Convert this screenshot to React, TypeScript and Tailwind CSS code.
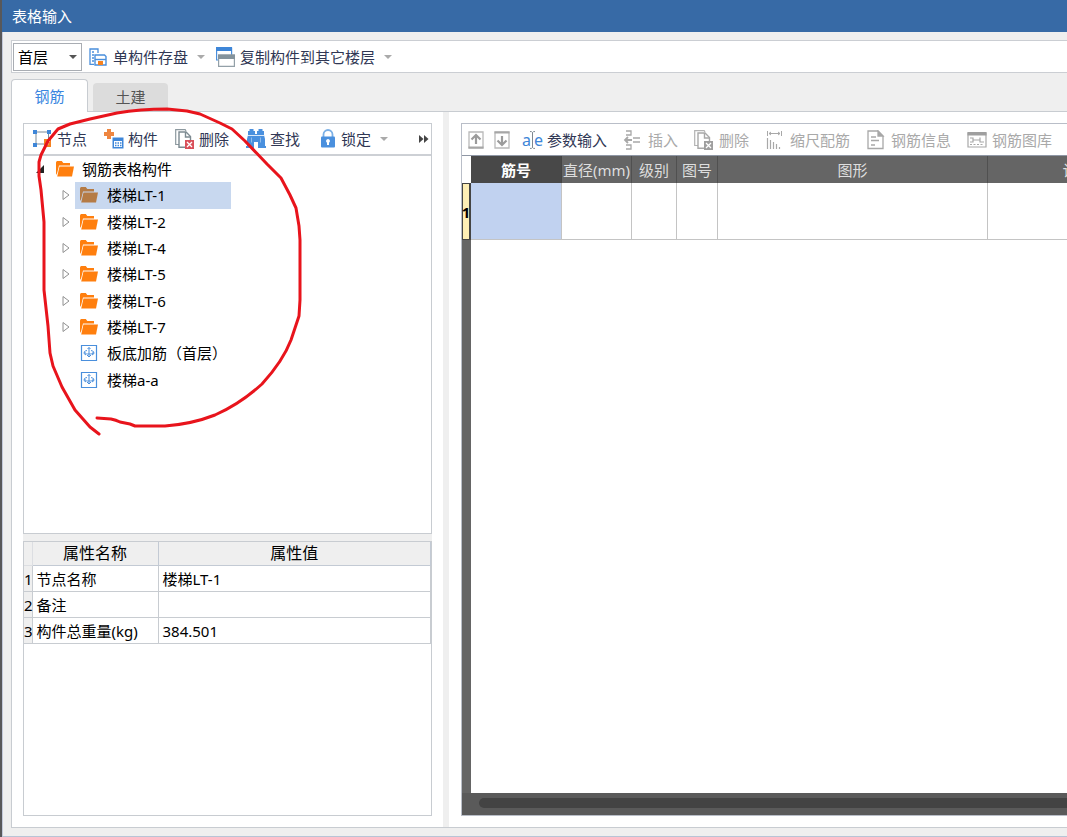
import React from "react";

const treeItems = [
  { label: "楼梯LT-1", folder: true, selected: true },
  { label: "楼梯LT-2", folder: true },
  { label: "楼梯LT-4", folder: true },
  { label: "楼梯LT-5", folder: true },
  { label: "楼梯LT-6", folder: true },
  { label: "楼梯LT-7", folder: true },
  { label: "板底加筋（首层）", folder: false },
  { label: "楼梯a-a", folder: false },
];

const properties = [
  { name: "节点名称", value: "楼梯LT-1" },
  { name: "备注", value: "" },
  { name: "构件总重量(kg)", value: "384.501" },
];

function Caret({ className }: { className: string }) {
  return (
    <svg viewBox="0 0 8 4" className={`h-1 w-2 shrink-0 ${className}`} fill="currentColor">
      <path d="M0 0h8L4 4z" />
    </svg>
  );
}

function SaveIcon() {
  return (
    <svg viewBox="0 0 18 18" className="h-[18px] w-[18px] shrink-0" fill="none">
      <path d="M5 16.3H1V1h8v4" stroke="#4a8fdc" strokeWidth="1.3" />
      <path d="M3 4h2M3 7h2M3 10h2M3 13h2" stroke="#4a8fdc" strokeWidth="1.3" />
      <path d="M6 7h9.500l1.500 1.500V17H6z" fill="#fff" stroke="#4a8fdc" strokeWidth="1.4" />
      <path d="M6 11.500h11" stroke="#4a8fdc" strokeWidth="1.400" />
      <path d="M9 13h5v4H9z" fill="#f58220" />
    </svg>
  );
}

function CopyFloorIcon() {
  return (
    <svg viewBox="0 0 19 20" className="h-5 w-[19px] shrink-0" fill="none">
      <path d="M.6 1h15v12H.6z" fill="#fff" stroke="#4a8fdc" strokeWidth="1.200" />
      <path d="M0 0h16v4H0z" fill="#3e86d8" />
      <path d="M2.600 8h15.800v11.400H2.600z" fill="#fff" stroke="#93a0a8" strokeWidth="1.200" />
      <path d="M2 7.500h17V12H2z" fill="#84939c" />
    </svg>
  );
}

function NodeIcon() {
  return (
    <svg viewBox="0 0 20 20" className="h-5 w-5 shrink-0" fill="none">
      <path d="M3 3h12.500v12H3z" stroke="#7d8b97" strokeWidth="1" />
      <path d="M0 1h4v4H0zM14 1h4v4h-4zM0 14h4v4H0z" fill="#3e86d8" />
      <path d="M11 10h7v8h-7z" fill="#f58220" />
      <path d="M13 15.500h2v-3h2" stroke="#fff" strokeWidth="1" />
    </svg>
  );
}

function ComponentIcon() {
  return (
    <svg viewBox="0 0 20 20" className="h-5 w-5 shrink-0" fill="none">
      <path d="M3 0h4v3h3v4H7v3H3V7H0V3h3z" fill="#ee8640" />
      <path d="M8.500 8.500h11v11h-11z" fill="#3e86d8" />
      <path d="M10 12h8v6h-8z" fill="#fff" />
      <path d="M11 14h1.500M13.500 14H15M16 14h1.500M11 16.500h1.500M13.500 16.500H15M16 16.500h1.500" stroke="#3e86d8" strokeWidth="1.300" />
    </svg>
  );
}

function DeleteIcon({ muted }: { muted?: boolean }) {
  return (
    <svg viewBox="0 0 20 20" className="h-5 w-5 shrink-0" fill="none">
      <path d="M4 15.500H.7V.7h9.500L11 2" stroke={muted ? "#b3b3b3" : "#8d999f"} strokeWidth="1.200" />
      <path d="M10 18.300H4V3h7l4.500 4.500V11" stroke={muted ? "#a8a8a8" : "#7d8a91"} strokeWidth="1.400" />
      <path d="M10.500 3v5h5" stroke={muted ? "#a8a8a8" : "#7d8a91"} strokeWidth="1.400" />
      <path d="M10 11h9v9h-9z" fill={muted ? "#9f9f9f" : "#d9505a"} />
      <path d="m12 13 5 5M17 13l-5 5" stroke="#fff" strokeWidth="1.300" />
    </svg>
  );
}

function FindIcon() {
  return (
    <svg viewBox="0 0 20 20" className="h-5 w-5 shrink-0" fill="#4a90de">
      <path d="M3.500 0h4v2H9v3h2V2h1.500V0h4v2H18v4l1 4v9h-7v-6H8v6H1v-9l1-4V2h1.500z" />
      <path d="M1.500 6.500h17" stroke="#fff" strokeWidth=".8" />
      <path d="M5.500 8.500v5M14.500 8.500v5" stroke="#8fbcec" strokeWidth="1" />
      <path d="M0 17h8v2H0zM12 17h8v2h-8z" />
    </svg>
  );
}

function LockIcon() {
  return (
    <svg viewBox="0 0 16 20" className="h-5 w-4 shrink-0" fill="none">
      <path d="M3.500 9V5.500a4.500 4.500 0 0 1 9 0V9" stroke="#7bb0e6" strokeWidth="1.800" />
      <rect x="1" y="7.500" width="14" height="11" rx="1" fill="#4a90de" />
      <path d="M8 10a2 2 0 0 0-1 3.700V16h2v-2.300A2 2 0 0 0 8 10z" fill="#fff" />
    </svg>
  );
}

function MoveIcon({ down }: { down?: boolean }) {
  return (
    <svg viewBox="0 0 16 18" className={`h-[18px] w-4 ${down ? "rotate-180" : ""}`} fill="none">
      <path d="M1 1h14v16H1z" stroke="#b9b9b9" strokeWidth="1.300" />
      <path d="M.5 15.500h15v2H.5z" fill="#a6a6a6" />
      <path d="M8 13V4M3.500 8.500 8 4l4.500 4.500" stroke="#9b9b9b" strokeWidth="2.200" />
    </svg>
  );
}

function ParamIcon() {
  return (
    <span className="flex w-5 shrink-0 items-center font-['Noto_Sans'] text-base leading-none text-[#3e86d8]">
      a
      <svg viewBox="0 0 5 18" className="-mx-px h-[18px] w-[5px] shrink-0" fill="none" stroke="#7d8790">
        <path d="M0 .6h1.500l1 1 1-1H5M2.500 1.500v15M0 17.400h1.500l1-1 1 1H5" />
      </svg>
      e
    </span>
  );
}

function InsertIcon() {
  return (
    <svg viewBox="0 0 20 20" className="h-5 w-5 shrink-0" fill="none" stroke="#a8a8a8" strokeWidth="1.300">
      <path d="M3 1h5v4H3M3 15h5v4H3" />
      <path d="M9 10H2M5 7l-3 3 3 3" strokeWidth="1.800" />
      <path d="M10 8h7M10 12h7" strokeWidth="1.600" />
    </svg>
  );
}

function ScaleIcon() {
  return (
    <svg viewBox="0 0 20 20" className="h-5 w-5 shrink-0" fill="none" stroke="#a8a8a8">
      <path d="M2.500 1v5M16.500 1v5M4 3.500h11M6 2 4 3.500 6 5M13 2l2 1.500L13 5" />
      <path d="M2.500 8v11M5.500 10v9M8.500 12v7M11.500 14v5M14.500 17v2" strokeWidth="1.200" />
    </svg>
  );
}

function InfoIcon() {
  return (
    <svg viewBox="0 0 20 20" className="h-5 w-5 shrink-0" fill="none" stroke="#a8a8a8" strokeWidth="1.300">
      <path d="M2 1h10l5 5v12.500H2z" />
      <path d="M12 1v5h5z" fill="#a8a8a8" />
      <path d="M5 7h5M5 10.500h8M5 15h4" />
    </svg>
  );
}

function LibraryIcon() {
  return (
    <svg viewBox="0 0 20 20" className="h-5 w-5 shrink-0" fill="none" stroke="#a8a8a8" strokeWidth="1.200">
      <path d="M1 3h18v14H1z" />
      <path d="M.5 2h19v3.500H.5z" fill="#9f9f9f" stroke="none" />
      <path d="M3 8h3v4H3M6 10h7M13 7.500v4.500h4" />
      <path d="M3 14.500h14" strokeDasharray="2 1.500" />
    </svg>
  );
}

function FolderIcon({ selected }: { selected?: boolean }) {
  return (
    <svg viewBox="0 0 18 16" className="h-4 w-[18px] shrink-0" fill={selected ? "#b57b45" : "#ff7f0e"}>
      <path d="M0 1.500.8 0h5l1.500 2H14v2.500H3L1.200 12 0 14z" />
      <path d="M3.500 5.500H18L16 15.500H1.200z" />
    </svg>
  );
}

function MemberIcon() {
  return (
    <svg viewBox="0 0 18 18" className="h-[18px] w-[18px] shrink-0" fill="none" stroke="#4a8fdc">
      <path d="M1.500 1.500h15v15h-15z" strokeWidth="1.200" />
      <path d="M9 3.500v9M7.500 5 9 3.500 10.500 5M7 11l2 2 2-2" />
      <path d="M7 6.500C4.500 7 3.500 8 4.500 9S7 10 9 10s4 0 4.800-1.200S12.500 7 11 6.500M5.500 8 4 9.500 6 11M12.500 8 14 9.500 12 11" />
    </svg>
  );
}

function ToolButton({ icon, label, disabled, className = "gap-1" }: { icon: React.ReactNode; label: string; disabled?: boolean; className?: string }) {
  return (
    <button type="button" disabled={disabled} className={`flex shrink-0 items-center whitespace-nowrap text-[#303754] disabled:text-[#a9a9a9] ${className}`}>
      {icon}
      <span>{label}</span>
    </button>
  );
}

function TopToolbar() {
  return (
    <div className="ml-2 flex h-[33px] shrink-0 items-center border border-r-0 border-[#cbced3] bg-white pl-px">
      <div className="relative">
        <select aria-label="楼层" className="h-7 w-[69px] appearance-none border border-[#a9adb3] bg-white pl-1 text-black">
          <option>首层</option>
        </select>
        <Caret className="pointer-events-none absolute right-[5px] top-3 text-[#555]" />
      </div>
      <ToolButton icon={<SaveIcon />} label="单构件存盘" className="ml-[7px] gap-[6px]" />
      <Caret className="ml-[9px] text-[#aaa]" />
      <ToolButton icon={<CopyFloorIcon />} label="复制构件到其它楼层" className="ml-[11px] gap-[5px]" />
      <Caret className="ml-[9px] text-[#aaa]" />
    </div>
  );
}

function TreePanel() {
  return (
    <div className="flex min-h-0 flex-[411] flex-col border border-[#c8ccd1]">
      <div className="flex h-8 shrink-0 items-center border-b-2 border-[#cdd0d5] pl-[9px] pr-[2px]">
        <div className="flex gap-[17px]">
          <ToolButton icon={<NodeIcon />} label="节点" />
          <ToolButton icon={<ComponentIcon />} label="构件" />
          <ToolButton icon={<DeleteIcon />} label="删除" />
          <ToolButton icon={<FindIcon />} label="查找" />
        </div>
        <ToolButton icon={<LockIcon />} label="锁定" className="ml-5 gap-[5px]" />
        <Caret className="ml-[9px] text-[#aaa]" />
        <button type="button" aria-label="更多" className="ml-auto">
          <svg viewBox="0 0 10 8" className="h-2 w-[10px]" fill="#444">
            <path d="M0 0l4.500 4L0 8zM5 0l4.500 4L5 8z" />
          </svg>
        </button>
      </div>
      <ul className="grid h-[237px] grid-rows-9 text-black">
        <li className="flex items-center pl-3">
          <svg viewBox="0 0 8 8" className="h-2 w-2" fill="#222">
            <path d="M8 0v8H0z" />
          </svg>
          <button type="button" className="flex items-center gap-2 pl-3">
            <FolderIcon />
            <span>钢筋表格构件</span>
          </button>
        </li>
        {treeItems.map((item) => (
          <li key={item.label} className="flex items-center pl-[38px]">
            <span className="w-[13px]">
              {item.folder && (
                <svg viewBox="0 0 8 10" className="h-[10px] w-2" fill="#fff" stroke="#909090">
                  <path d="M1 .5l6 4.500-6 4.500z" />
                </svg>
              )}
            </span>
            <button
              type="button"
              className={`flex h-full w-[156px] items-center gap-[9px] whitespace-nowrap pl-[5px] ${item.selected ? "bg-[#c8d8ef]" : ""}`}
            >
              {item.folder ? <FolderIcon selected={item.selected} /> : <MemberIcon />}
              <span>{item.label}</span>
            </button>
          </li>
        ))}
      </ul>
    </div>
  );
}

function PropertyPanel() {
  return (
    <div className="min-h-0 flex-[275] border border-[#c8ccd1] bg-white">
      <table className="w-full table-fixed border-collapse text-black">
        <colgroup>
          <col className="w-2" />
          <col className="w-[126px]" />
          <col />
        </colgroup>
        <thead>
          <tr className="h-6 bg-[#efefef] text-base leading-5">
            <th className="border-b border-r border-[#dcdee2] p-0"></th>
            <th className="border-b border-r border-[#c3cad4] p-0 font-normal">属性名称</th>
            <th className="border-b border-r border-[#c3cad4] p-0 font-normal">属性值</th>
          </tr>
        </thead>
        <tbody>
          {properties.map((property, index) => (
            <tr key={property.name} className="h-[26px]">
              <th className="border-b border-r border-[#c8ccd1] bg-[#efefef] p-0 text-left font-normal">{index + 1}</th>
              <td className="whitespace-nowrap border-b border-r border-[#c8ccd1] p-0 pl-1">{property.name}</td>
              <td className="border-b border-r border-[#c8ccd1] p-0 pl-1">{property.value}</td>
            </tr>
          ))}
        </tbody>
      </table>
    </div>
  );
}

function RebarPanel() {
  return (
    <div className="flex min-w-0 flex-1 flex-col border border-r-0 border-[#b9bec8]">
      <div className="flex h-8 shrink-0 items-center overflow-hidden border-b border-[#8f97a5] pl-[6px]">
        <button type="button" aria-label="上移" disabled>
          <MoveIcon />
        </button>
        <button type="button" aria-label="下移" className="ml-[10px]" disabled>
          <MoveIcon down />
        </button>
        <div className="ml-3 flex gap-4">
          <ToolButton icon={<ParamIcon />} label="参数输入" className="gap-[5px]" />
          <ToolButton icon={<InsertIcon />} label="插入" className="gap-[5px]" disabled />
          <ToolButton icon={<DeleteIcon muted />} label="删除" className="gap-[5px]" disabled />
          <ToolButton icon={<ScaleIcon />} label="缩尺配筋" className="gap-[5px]" disabled />
          <ToolButton icon={<InfoIcon />} label="钢筋信息" className="gap-[5px]" disabled />
          <ToolButton icon={<LibraryIcon />} label="钢筋图库" className="gap-[5px]" disabled />
        </div>
      </div>
      <div className="flex min-h-0 flex-1 flex-col overflow-hidden bg-[#656565]">
        <table className="w-[736px] shrink-0 table-fixed border-separate border-spacing-0">
          <colgroup>
            <col className="w-[9px]" />
            <col className="w-[91px]" />
            <col className="w-[70px]" />
            <col className="w-[45px]" />
            <col className="w-[41px]" />
            <col className="w-[270px]" />
            <col className="w-[210px]" />
          </colgroup>
          <thead>
            <tr className="h-[27px] whitespace-nowrap text-[#dedede]">
              <th className="bg-white p-0"></th>
              <th className="border-r border-[#444] bg-[#484848] p-0 font-bold text-white">筋号</th>
              <th className="border-r border-[#505050] p-0 font-normal">直径(mm)</th>
              <th className="border-r border-[#505050] p-0 font-normal">级别</th>
              <th className="border-r border-[#505050] p-0 font-normal">图号</th>
              <th className="border-r border-[#505050] p-0 font-normal">图形</th>
              <th className="border-r border-[#505050] p-0 font-normal">计算公式</th>
            </tr>
          </thead>
          <tbody>
            <tr className="h-[57px] bg-white">
              <th className="border border-r-2 border-[#444] bg-[#fdeeb5] p-0 font-bold text-black">
                <span className="flex justify-center">1</span>
              </th>
              <td className="border-b border-r border-[#c4c4c4] bg-[#c1d2f0]"></td>
              <td className="border-b border-r border-[#c4c4c4]"></td>
              <td className="border-b border-r border-[#c4c4c4]"></td>
              <td className="border-b border-r border-[#c4c4c4]"></td>
              <td className="border-b border-r border-[#c4c4c4]"></td>
              <td className="border-b border-r border-[#c4c4c4]"></td>
            </tr>
          </tbody>
        </table>
        <div className="ml-[9px] flex-1 bg-white"></div>
        <div className="h-[22px] shrink-0 bg-[#5a5a5a] pl-[17px] pt-[5px]">
          <div className="h-[10px] rounded-l-full bg-[#434343]"></div>
        </div>
      </div>
    </div>
  );
}

// hand drawn red loop around the component tree
function Annotation() {
  return (
    <svg className="pointer-events-none absolute left-0 top-0 h-[440px] w-80" viewBox="0 0 320 440" fill="none">
      <path
        d="M97 418L111 419Q116 420 120 422L130 424L135 426H165Q192 424 215 415Q240 404 262 384Q283 361 291 340L299 316L300 300V240L299 226L296 208L290 195L281 178L267 164L245 141L232 129L220 123L200 114L187 111L167 109Q140 109 117 113L90 119L70 124L58 129L48 141L41 155L39 162V176L41 190L44 222V290L48 326L50 353L53 366L62 387L75 410L90 427L99 434"
        stroke="#e8141c"
        strokeWidth="3"
        strokeLinecap="round"
        strokeLinejoin="round"
      />
    </svg>
  );
}

function App() {
  return (
    <div className="relative flex h-screen overflow-hidden bg-[#58585a] pl-[2px] font-['Noto_Sans','Noto_Sans_CJK_SC',sans-serif] text-[15px] leading-5">
      <div className="flex min-w-0 flex-1 flex-col border-b border-[#b8c4d6] bg-[#efefef]">
        <header className="flex h-8 shrink-0 items-center bg-[#376aa6] pl-[10px] text-white">
          <h1>表格输入</h1>
        </header>
        <div className="flex min-h-0 flex-1 flex-col border-l border-[#c3c9da] pt-2">
          <TopToolbar />
          <div role="tablist" className="ml-2 mt-[6px] flex h-8 shrink-0 items-end">
            <button type="button" role="tab" aria-selected="true" className="relative -mb-px h-[33px] w-[77px] rounded-t border border-b-0 border-[#c8ccd1] bg-white text-[#3a86e0]">
              钢筋
            </button>
            <button type="button" role="tab" aria-selected="false" className="ml-[5px] h-7 w-[75px] rounded-t bg-[#dcdcdc] text-[#555]">
              土建
            </button>
          </div>
          <main className="mb-2 ml-2 flex min-h-0 flex-1 border border-r-0 border-[#c8ccd1] bg-white">
            <div className="flex w-[431px] shrink-0 flex-col py-[11px] pl-[11px] pr-[11px]">
              <TreePanel />
              <div className="h-[7px] shrink-0 bg-[#efefef]"></div>
              <PropertyPanel />
            </div>
            <div className="w-[6px] shrink-0 bg-[#efefef]"></div>
            <div className="flex min-w-0 flex-1 py-[11px] pl-3">
              <RebarPanel />
            </div>
          </main>
        </div>
      </div>
      <Annotation />
    </div>
  );
}

export default App;
